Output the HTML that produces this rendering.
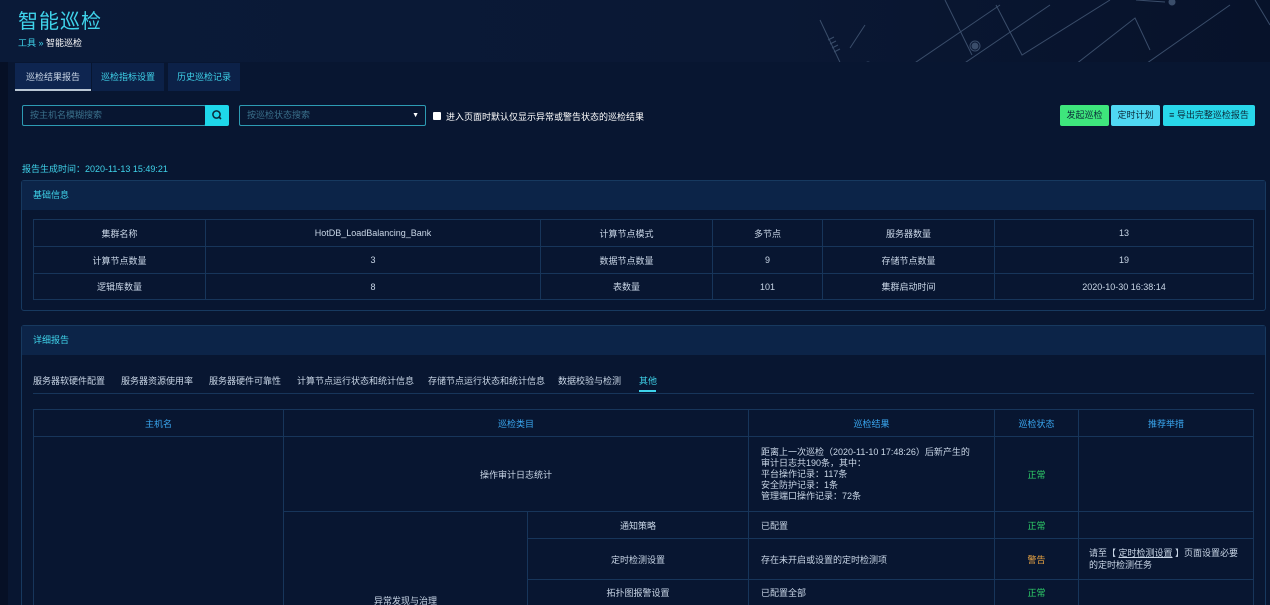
<!DOCTYPE html>
<html style="width:1270px;height:605px;overflow:hidden"><head><meta charset="utf-8"><style>
*{margin:0;padding:0;box-sizing:border-box}
body{width:1270px;height:605px;overflow:hidden;background:#081631;font-family:"Liberation Sans","Noto Sans CJK SC",sans-serif;font-size:9px;color:#c9d6e6;position:relative}
.abs{position:absolute}
#hdr{left:0;top:0;width:1270px;height:62px;background:linear-gradient(90deg,#0a1a38,#0a1834 60%,#07122a)}
#leftbar{left:0;top:62px;width:8px;height:543px;background:#061026}
.title{left:18px;top:5px;font-size:20px;color:#3fd3ea;letter-spacing:1px}
.bc{left:18px;top:36px;font-size:9px;color:#fff}
.bc b{color:#3fd3ea;font-weight:normal}
.tab{top:63px;height:28px;line-height:28px;text-align:center;background:#0c2148;color:#3fd3ea;font-size:9px}
.inp{border:1px solid #2d9bb3;border-radius:2px;height:21px;line-height:19px;padding-left:7px;color:#3a6f8a;font-size:9px;background:#081631}
.btn{top:105px;height:21px;line-height:21px;text-align:center;border-radius:2px;color:#0b2a3a;font-size:9px}
.panel{border:1px solid #17395f;border-radius:3px;background:#081631}
.ph{height:29px;line-height:29px;background:#0c2448;color:#3fd3ea;padding-left:11px;font-size:9px}
table{border-collapse:collapse;position:absolute}
td,th{border:1px solid #17355a;text-align:center;font-size:9px;font-weight:normal;color:#c9d6e6}
th{color:#3aa7f0}
.ok{color:#2fd36a}.warn{color:#e8a443}
.st{top:374px;font-size:9px;color:#c9d6e6}
</style></head><body>
<div id="hdr" class="abs">
<svg width="1270" height="62" class="abs" style="left:0;top:0" stroke="#3a4d6a" stroke-width="1" fill="none">
<path d="M820 20 L846 75 M850 48 L865 25 M897 75 L1000 5 M947 75 L1050 5 M945 0 L972 55 M996 5 L1022 55 L1110 0 M1062 75 L1135 18 L1150 50 M1130 75 L1230 5 M1255 0 L1270 25 M1136 0 L1165 2"/>
<circle cx="975" cy="46" r="5"/><circle cx="975" cy="46" r="3" fill="#3a4d6a"/>
<circle cx="868" cy="65" r="3" fill="#3a4d6a"/><circle cx="1062" cy="66" r="3" fill="#3a4d6a"/><circle cx="1172" cy="2" r="3" fill="#3a4d6a"/><circle cx="1274" cy="24" r="3" fill="#3a4d6a"/>
<path d="M828 40 l6 -3 M830 44 l6 -3 M832 48 l6 -3 M834 52 l6 -3"/>
</svg>
<div class="abs title">智能巡检</div>
<div class="abs bc"><b>工具</b> <b>»</b> 智能巡检</div>
</div>
<div id="leftbar" class="abs"></div>
<div class="abs tab" style="left:15px;width:76px;background:#0e2550;color:#c9d6e6;border-bottom:2px solid #b9c6d4">巡检结果报告</div>
<div class="abs tab" style="left:92px;width:72px">巡检指标设置</div>
<div class="abs tab" style="left:168px;width:72px">历史巡检记录</div>

<div class="abs inp" style="left:22px;top:105px;width:184px">按主机名模糊搜索</div>
<div class="abs" style="left:205px;top:105px;width:24px;height:21px;background:#1ed7ea;border-radius:0 2px 2px 0">
<svg width="24" height="21"><circle cx="11.5" cy="9.5" r="3.6" stroke="#0b2a3a" stroke-width="1.5" fill="none"/><path d="M14 12 L16 14" stroke="#0b2a3a" stroke-width="1.6"/></svg></div>
<div class="abs inp" style="left:239px;top:105px;width:187px">按巡检状态搜索<span class="abs" style="right:6px;top:0;color:#fff;font-size:7px">▼</span></div>
<div class="abs" style="left:433px;top:112px;width:8px;height:8px;background:#fff;border-radius:1px"></div>
<div class="abs" style="left:446px;top:110px;color:#fff">进入页面时默认仅显示异常或警告状态的巡检结果</div>
<div class="abs btn" style="left:1060px;width:49px;background:#3ee67c">发起巡检</div>
<div class="abs btn" style="left:1111px;width:49px;background:#4fd8f3">定时计划</div>
<div class="abs btn" style="left:1163px;width:92px;background:#28d7ea">≡ 导出完整巡检报告</div>

<div class="abs" style="left:22px;top:162px;color:#3fd3ea">报告生成时间：2020-11-13 15:49:21</div>

<div class="abs panel" style="left:21px;top:180px;width:1245px;height:131px"><div class="ph">基础信息</div></div>
<table style="left:33px;top:219px;width:1221px">
<colgroup><col style="width:172px"><col style="width:335px"><col style="width:172px"><col style="width:110px"><col style="width:172px"><col></colgroup>
<tr style="height:27px"><td>集群名称</td><td>HotDB_LoadBalancing_Bank</td><td>计算节点模式</td><td>多节点</td><td>服务器数量</td><td>13</td></tr>
<tr style="height:27px"><td>计算节点数量</td><td>3</td><td>数据节点数量</td><td>9</td><td>存储节点数量</td><td>19</td></tr>
<tr style="height:26px"><td>逻辑库数量</td><td>8</td><td>表数量</td><td>101</td><td>集群启动时间</td><td>2020-10-30 16:38:14</td></tr>
</table>

<div class="abs" style="left:0;top:325px;width:1270px;height:280px;overflow:hidden">
<div class="abs panel" style="left:21px;top:0;width:1245px;height:320px"><div class="ph">详细报告</div></div>
</div>
<div class="abs st" style="left:33px">服务器软硬件配置</div>
<div class="abs st" style="left:121px">服务器资源使用率</div>
<div class="abs st" style="left:209px">服务器硬件可靠性</div>
<div class="abs st" style="left:297px">计算节点运行状态和统计信息</div>
<div class="abs st" style="left:428px">存储节点运行状态和统计信息</div>
<div class="abs st" style="left:558px">数据校验与检测</div>
<div class="abs st" style="left:639px;color:#3fd3ea">其他</div>
<div class="abs" style="left:639px;top:390px;width:17px;height:2px;background:#3fd3ea"></div>
<div class="abs" style="left:33px;top:393px;width:1221px;height:1px;background:#17355a"></div>

<div class="abs" style="left:0;top:409px;width:1270px;height:196px;overflow:hidden">
<table style="left:33px;top:0;width:1221px">
<colgroup><col style="width:250px"><col style="width:244px"><col style="width:221px"><col style="width:246px"><col style="width:84px"><col></colgroup>
<tr style="height:27px"><th>主机名</th><th colspan="2">巡检类目</th><th>巡检结果</th><th>巡检状态</th><th>推荐举措</th></tr>
<tr style="height:75px"><td rowspan="4"></td><td colspan="2">操作审计日志统计</td><td style="text-align:left;padding-left:12px;line-height:11px">距离上一次巡检（2020-11-10 17:48:26）后新产生的<br>审计日志共190条，其中：<br>平台操作记录：117条<br>安全防护记录：1条<br>管理端口操作记录：72条</td><td class="ok">正常</td><td></td></tr>
<tr style="height:27px"><td rowspan="3" style="vertical-align:top;padding-top:82px">异常发现与治理</td><td>通知策略</td><td style="text-align:left;padding-left:12px">已配置</td><td class="ok">正常</td><td></td></tr>
<tr style="height:41px"><td>定时检测设置</td><td style="text-align:left;padding-left:12px">存在未开启或设置的定时检测项</td><td class="warn">警告</td><td style="text-align:left;padding-left:10px;line-height:12px">请至【 <u>定时检测设置</u> 】页面设置必要<br>的定时检测任务</td></tr>
<tr style="height:40px"><td style="vertical-align:top;padding-top:6px">拓扑图报警设置</td><td style="text-align:left;padding-left:12px;vertical-align:top;padding-top:6px">已配置全部</td><td class="ok" style="vertical-align:top;padding-top:6px">正常</td><td></td></tr>
</table>
</div>
</body></html>
